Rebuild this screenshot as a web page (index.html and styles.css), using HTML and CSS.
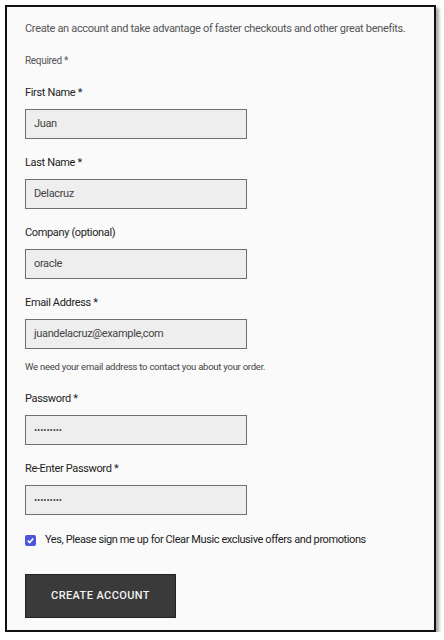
FILE: index.html
```html
<!DOCTYPE html>
<html>
<head>
<meta charset="utf-8">
<link rel="stylesheet" href="styles.css">
</head>
<body>
<div class="frame">
  <form class="form">
    <p class="intro">Create an account and take advantage of faster checkouts and other great benefits.</p>
    <p class="required">Required *</p>
    <div class="field">
      <label class="label">First Name *</label>
      <div class="input">Juan</div>
    </div>
    <div class="field">
      <label class="label">Last Name *</label>
      <div class="input">Delacruz</div>
    </div>
    <div class="field">
      <label class="label">Company (optional)</label>
      <div class="input">oracle</div>
    </div>
    <div class="field">
      <label class="label">Email Address *</label>
      <div class="input">juandelacruz@example,com</div>
      <p class="help">We need your email address to contact you about your order.</p>
    </div>
    <div class="field">
      <label class="label">Password *</label>
      <div class="input dots">•••••••••</div>
    </div>
    <div class="field">
      <label class="label">Re-Enter Password *</label>
      <div class="input dots">•••••••••</div>
    </div>
    <div class="check">
      <span class="box"><svg width="9" height="9" viewBox="0 0 9 9"><path d="M1.8 4.6 L3.7 6.5 L7.2 2.4" fill="none" stroke="#fff" stroke-width="1.6"/></svg></span>
      <span class="check-text">Yes, Please sign me up for Clear Music exclusive offers and promotions</span>
    </div>
    <div class="btn">CREATE ACCOUNT</div>
  </form>
</div>
</body>
</html>
```
FILE: styles.css
```css
html, body { margin: 0; padding: 0; background: #ffffff; }
body { font-family: Roboto, "Liberation Sans", sans-serif; }
.frame {
  margin: 5px 0 0 5px;
  width: 427px;
  height: 623px;
  border: 2px solid #111;
  background: #fafafa;
  box-shadow: 3px 3px 3px rgba(0,0,0,0.35);
}
.form { padding: 14px 0 0 18px; }
.intro {
  margin: 0; font-size: 11px; line-height: 16px; color: #555;
  letter-spacing: -0.33px;
}
.required {
  margin: 16px 0 0; font-size: 10px; line-height: 16px; color: #555;
  letter-spacing: -0.3px;
}
.field { margin-top: 16px; }
.label {
  display: block; font-size: 11px; line-height: 16px; color: #222;
  letter-spacing: -0.35px;
}
.input {
  margin-top: 8px;
  box-sizing: border-box;
  width: 222px; height: 30px;
  border: 1px solid #6e6e6e;
  background: #eeeeee;
  padding: 0 8px;
  font-size: 11px; line-height: 28px; color: #444;
  letter-spacing: -0.35px;
}
.dots { font-size: 9.5px; letter-spacing: -0.1px; }
.help {
  margin: 10px 0 0; font-size: 9.5px; line-height: 16px; color: #444;
  letter-spacing: -0.25px;
}
.check { margin-top: 17px; display: flex; align-items: center; gap: 9px; height: 16px; }
.box {
  width: 11px; height: 11px; border-radius: 2px; background: #4b56d8;
  display: flex; align-items: center; justify-content: center;
}
.check-text { font-size: 11px; line-height: 16px; color: #222; letter-spacing: -0.4px; }
.btn {
  margin-top: 26px;
  width: 151px; height: 44px; box-sizing: border-box;
  background: #3a3a3a; border: 1px solid #222;
  color: #f2f2f2; font-size: 11px; font-weight: 500;
  letter-spacing: 0.4px; line-height: 42px; text-align: center;
}
```
